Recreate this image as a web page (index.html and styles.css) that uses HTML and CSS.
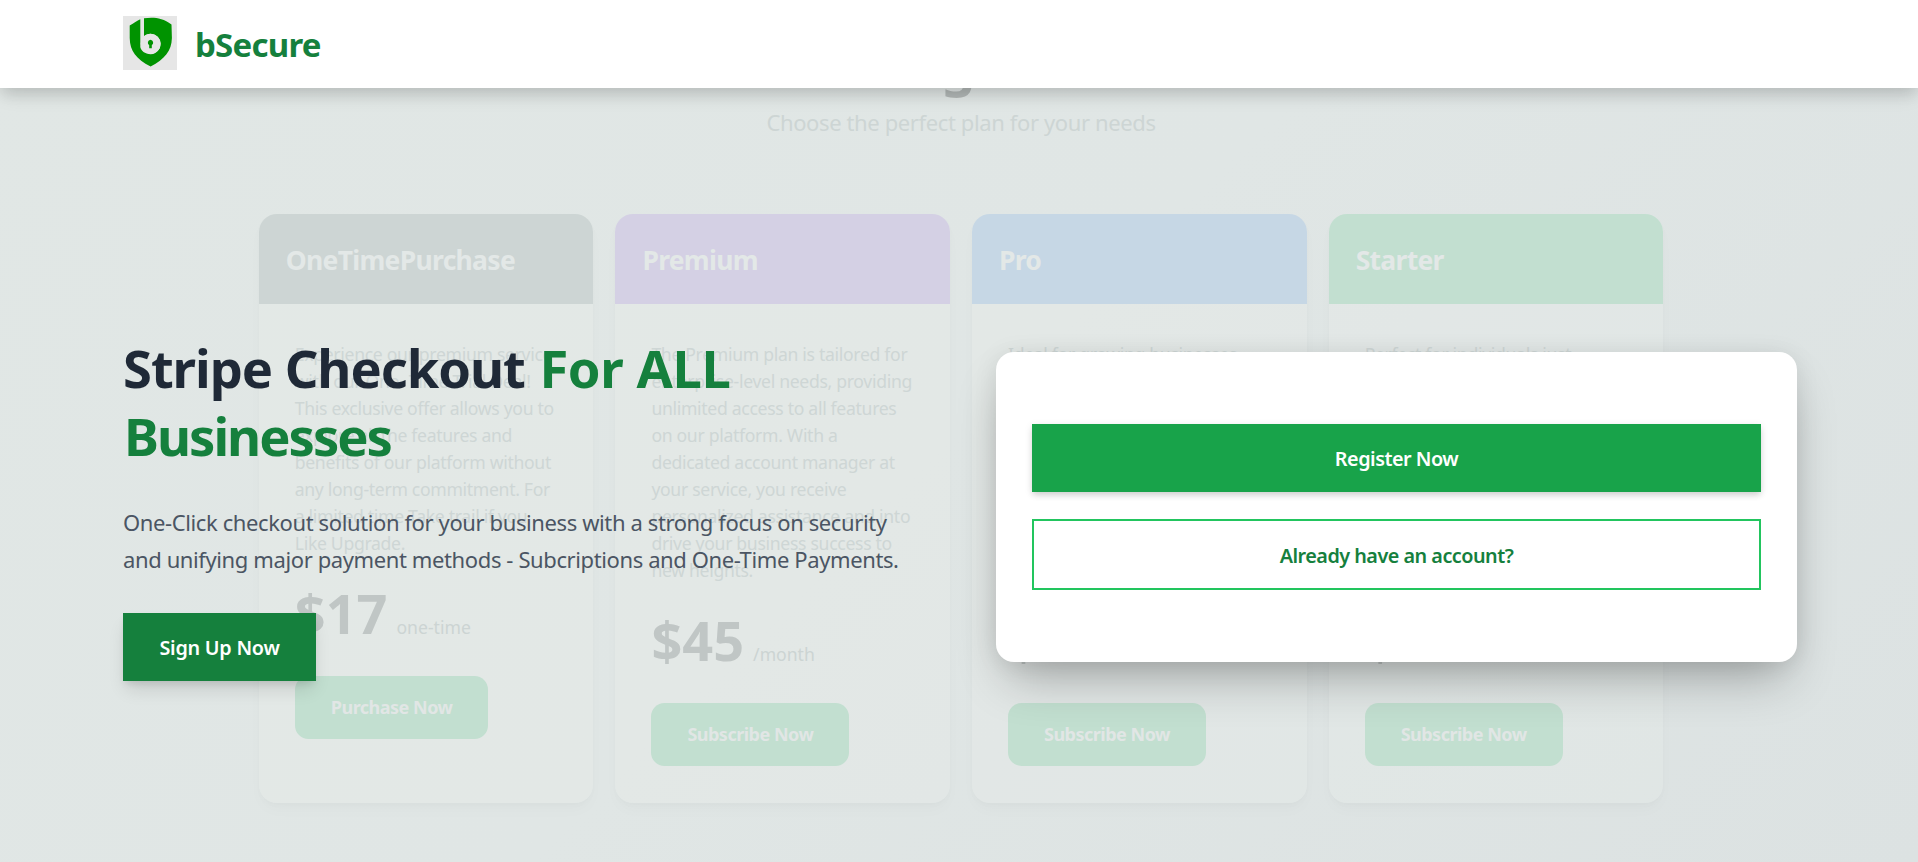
FILE: index.html
```html
<!DOCTYPE html>
<html lang="en">
<head>
<meta charset="utf-8">
<title>bSecure</title>
<link rel="stylesheet" href="styles.css">
</head>
<body>
<header class="navbar">
  <svg class="logo" viewBox="0 0 54 54" aria-hidden="true">
    <rect width="54" height="54" fill="#e6e6e6"/>
    <path fill="#009300" d="M6.7 9.5C11 7 14 4.500 17.300 3.200V31C17.700 34.500 22 38.200 27.700 38.200A10.200 10.200 0 1 0 21 20V2.200C30 1 39 1.200 48.500 8.500L48.900 22C48.500 35 42 43 27.600 50.500C13 43 7 35 6.700 22Z"/>
    <circle cx="27.700" cy="27.800" r="10" fill="#e6e6e6"/>
    <path fill="#009300" d="M27.500 23.800a3 3 0 0 1 1.300 5.500V32.200H26.200V29.300a3 3 0 0 1 1.300-5.500z"/>
  </svg>
  <span class="brand">bSecure</span>
</header>

<section class="pricing">
  <h2 class="pricing-title">Pricing Plans</h2>
  <p class="pricing-sub">Choose the perfect plan for your needs</p>
  <div class="plans">
    <article class="plan">
      <h3 class="plan-name gray">OneTimePurchase</h3>
      <div class="plan-body">
        <p class="plan-text">Experience our premium service<br>with our One- Time Trial Deal!<br>This exclusive offer allows you to<br>explore all the features and<br>benefits of our platform without<br>any long-term commitment. For<br>a limited time Take trail if you<br>Like Upgrade.</p>
        <p class="price">$17 <span class="period">one-time</span></p>
        <span class="plan-btn">Purchase Now</span>
      </div>
    </article>
    <article class="plan">
      <h3 class="plan-name purple">Premium</h3>
      <div class="plan-body">
        <p class="plan-text">The Premium plan is tailored for<br>enterprise-level needs, providing<br>unlimited access to all features<br>on our platform. With a<br>dedicated account manager at<br>your service, you receive<br>personalized assistance and into<br>drive your business success to<br>new heights.</p>
        <p class="price">$45 <span class="period">/month</span></p>
        <span class="plan-btn">Subscribe Now</span>
      </div>
    </article>
    <article class="plan">
      <h3 class="plan-name blue">Pro</h3>
      <div class="plan-body">
        <p class="plan-text tall">Ideal for growing businesses</p>
        <p class="price">$</p>
        <span class="plan-btn">Subscribe Now</span>
      </div>
    </article>
    <article class="plan">
      <h3 class="plan-name green">Starter</h3>
      <div class="plan-body">
        <p class="plan-text tall">Perfect for individuals just</p>
        <p class="price">$</p>
        <span class="plan-btn">Subscribe Now</span>
      </div>
    </article>
  </div>
</section>

<main class="hero">
  <div class="intro">
    <h1 class="headline">Stripe Checkout <span class="accent">For ALL<br><span class="tight">Businesses</span></span></h1>
    <p class="lead">One-Click checkout solution for your business with a strong focus on security<br>and unifying major payment methods - Subcriptions and One-Time Payments.</p>
    <a class="btn signup">Sign Up Now</a>
  </div>
  <div class="panel">
    <a class="btn register">Register Now</a>
    <a class="btn account">Already have an account?</a>
  </div>
</main>
</body>
</html>
```
FILE: styles.css
```css
* { box-sizing: border-box; margin: 0; padding: 0; }

html { font-size: 18px; }

body {
  position: relative;
  height: 862px;
  overflow: hidden;
  font-family: "Noto Sans", "Open Sans", sans-serif;
  line-height: 1.5;
  background: linear-gradient(135deg, #e1e7e5 0%, #e0e6e5 50%, #dce2e2 100%);
}

.navbar {
  position: relative;
  z-index: 3;
  display: flex;
  align-items: center;
  gap: 18px;
  height: 88px;
  padding: 0 123px 2px;
  background: #fff;
  box-shadow: 0 11px 17px -3px rgba(0, 0, 0, .1), 0 4px 14px rgba(0, 0, 0, .1);
}
.logo { width: 54px; height: 54px; }
.brand {
  padding-top: 3px;
  color: #15803d;
  font-size: 33px;
  font-weight: 700;
  letter-spacing: -0.75px;
}

/* Faded pricing section lying behind the hero */
.pricing {
  position: absolute;
  z-index: 1;
  top: 27px;
  left: 258.75px;
  width: 1404.5px;
}
.pricing-title {
  height: 79px;
  color: #b2b8b7;
  font-size: 54px;
  line-height: 75px;
  text-align: center;
}
.pricing-sub {
  height: 108px;
  color: #cdd5d4;
  font-size: 22px;
  line-height: 32px;
  letter-spacing: -0.38px;
  text-align: center;
}
.plans {
  display: grid;
  grid-template-columns: repeat(4, 1fr);
  gap: 22px;
  height: 589px;
}
.plan {
  overflow: hidden;
  border-radius: 18px;
  background: rgba(235, 240, 235, .22);
  box-shadow: 0 8px 16px -2px rgba(0, 0, 0, .022), 0 2px 6px rgba(0, 0, 0, .015);
}
.plan-name {
  height: 90px;
  padding: 28px 27px 26px;
  color: #e3e8e7;
  font-size: 26.5px;
  line-height: 36px;
  letter-spacing: -0.7px;
}
.gray { background: #cdd5d4; }
.purple { background: #d4d0e4; }
.blue { background: #c6d7e5; }
.green { background: #c2dfd0; }
.plan-body { padding: 37px 36px 35px; }
.plan-text {
  color: #ced6d5;
  font-size: 17.6px;
  line-height: 27px;
  letter-spacing: -0.31px;
  white-space: nowrap;
}
.tall { height: 243px; }
.price {
  height: 119px;
  color: #c0c6c5;
  font-size: 54px;
  font-weight: 700;
  line-height: 113px;
}
.period {
  margin-left: -5px;
  color: #ccd4d3;
  font-size: 17.6px;
  font-weight: 400;
}
.plan-btn {
  display: inline-block;
  padding: 18px 36px;
  border-radius: 13.5px;
  background: #c2dfd0;
  color: #e1e6e5;
  font-weight: 700;
  line-height: 27px;
  letter-spacing: -0.5px;
}

.hero {
  position: relative;
  z-index: 2;
  display: grid;
  grid-template-columns: 801px 801px;
  align-items: center;
  gap: 72px;
  height: 774px;
  padding: 64px 0 0 123px;
}
.headline {
  margin-bottom: 35px;
  padding-top: 1px;
  color: #1f2937;
  font-size: 52.5px;
  line-height: 67.5px;
  letter-spacing: -1.05px;
}
.accent {
  margin-left: 2px;
  color: #15803d;
  letter-spacing: -0.4px;
}
.tight { letter-spacing: -2px; margin-left: 1px; }
.lead {
  margin-bottom: 36px;
  color: #4b5563;
  font-size: 22px;
  line-height: 36.56px;
  letter-spacing: -0.39px;
  white-space: nowrap;
}
.btn {
  display: block;
  padding: 19px 36px 17px;
  font-size: 19.8px;
  font-weight: 600;
  line-height: 31.5px;
  letter-spacing: -0.5px;
  text-align: center;
}
.signup {
  width: 193px;
  background: #15803d;
  color: #fff;
  box-shadow: 0 11px 17px -3px rgba(0, 0, 0, .12), 0 4px 7px -2px rgba(0, 0, 0, .1);
  letter-spacing: -0.25px;
  white-space: nowrap;
}
.panel {
  display: flex;
  flex-direction: column;
  gap: 27px;
  padding: 72px 36px;
  border-radius: 18px;
  background: #fff;
  box-shadow: 0 25px 50px -12px rgba(0, 0, 0, .3), 0 2px 24px rgba(0, 0, 0, .08);
}
.register {
  background: #18a34a;
  color: #fff;
  box-shadow: 0 4px 6px -1px rgba(0, 0, 0, .12), 0 2px 8px rgba(0, 0, 0, .1);
}
.account {
  border: 2px solid #22c55e;
  color: #15803d;
}
```
